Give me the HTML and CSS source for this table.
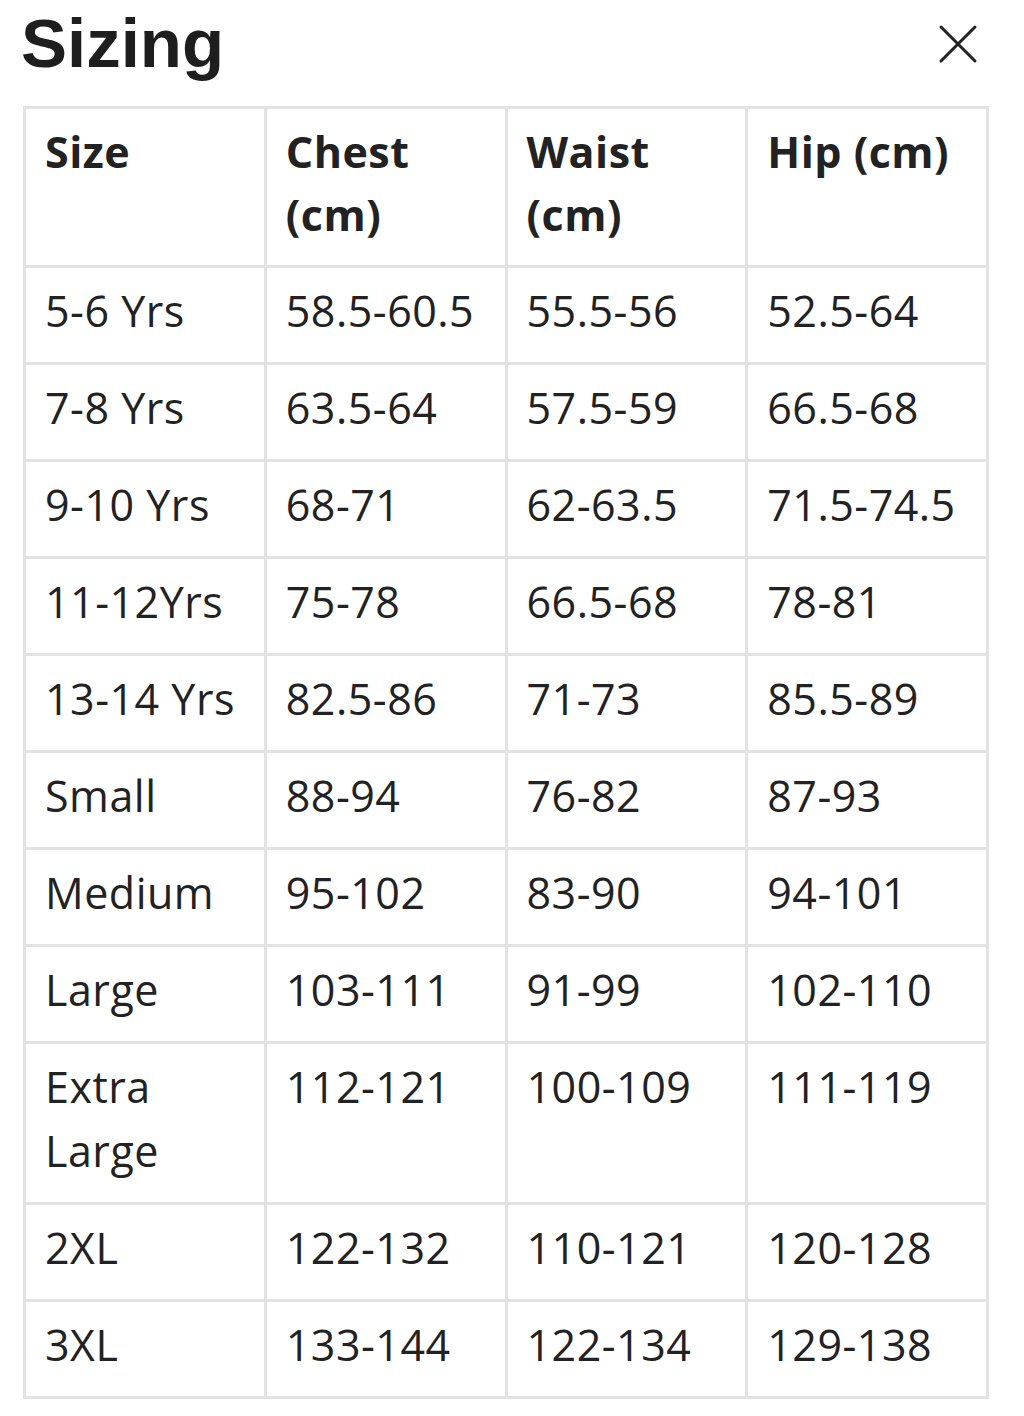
FILE: index.html
```html
<!DOCTYPE html>
<html lang="en">
<head>
    <meta charset="UTF-8">
    <meta name="viewport" content="width=device-width, initial-scale=1.0">
    <title>Sizing</title>
    <link rel="stylesheet" href="styles.css">
</head>
<body>
    <div class="sizing-panel">
        <div class="panel-header">
            <h1>Sizing</h1>
            <button class="close-btn" aria-label="Close">
                <svg width="40" height="40" viewBox="0 0 40 40">
                    <path d="M3 3 L37 37 M37 3 L3 37" stroke="currentColor" stroke-width="3" stroke-linecap="round" fill="none"/>
                </svg>
            </button>
        </div>

        <table class="size-table">
            <thead>
                <tr>
                    <th>Size</th>
                    <th>Chest (cm)</th>
                    <th>Waist (cm)</th>
                    <th>Hip (cm)</th>
                </tr>
            </thead>
            <tbody>
                <tr><td>5-6 Yrs</td><td>58.5-60.5</td><td>55.5-56</td><td>52.5-64</td></tr>
                <tr><td>7-8 Yrs</td><td>63.5-64</td><td>57.5-59</td><td>66.5-68</td></tr>
                <tr><td>9-10 Yrs</td><td>68-71</td><td>62-63.5</td><td>71.5-74.5</td></tr>
                <tr><td>11-12Yrs</td><td>75-78</td><td>66.5-68</td><td>78-81</td></tr>
                <tr><td>13-14 Yrs</td><td>82.5-86</td><td>71-73</td><td>85.5-89</td></tr>
                <tr><td>Small</td><td>88-94</td><td>76-82</td><td>87-93</td></tr>
                <tr><td>Medium</td><td>95-102</td><td>83-90</td><td>94-101</td></tr>
                <tr><td>Large</td><td>103-111</td><td>91-99</td><td>102-110</td></tr>
                <tr><td>Extra Large</td><td>112-121</td><td>100-109</td><td>111-119</td></tr>
                <tr><td>2XL</td><td>122-132</td><td>110-121</td><td>120-128</td></tr>
                <tr><td>3XL</td><td>133-144</td><td>122-134</td><td>129-138</td></tr>
            </tbody>
        </table>
    </div>
</body>
</html>
```

FILE: styles.css
```css
body {
    margin: 0;
    background: #fff;
    color: #222;
    font-family: 'Open Sans', sans-serif;
}

.sizing-panel {
    padding: 10px 35px 20px 23px;
}

.panel-header {
    display: flex;
    justify-content: space-between;
    align-items: center;
    margin-bottom: 28px;
}

.panel-header h1 {
    margin: 0 0 0 -2px;
    font-family: 'Liberation Sans', Arial, sans-serif;
    font-weight: bold;
    font-size: 69px;
    line-height: 68px;
    color: #1e1e1e;
}

.close-btn {
    background: none;
    border: none;
    padding: 0;
    margin-right: 11px;
    color: #222;
    cursor: pointer;
    display: flex;
}

.size-table {
    width: 966px;
    border-collapse: collapse;
    table-layout: fixed;
}

.size-table th,
.size-table td {
    border: 3px solid #e3e3e3;
    padding: 11px 19px 19px;
    text-align: left;
    vertical-align: top;
    font-size: 43px;
    line-height: 64px;
    letter-spacing: 0.5px;
}

.size-table th {
    font-weight: 700;
    line-height: 63px;
}

.size-table td {
    font-weight: 400;
}
```
